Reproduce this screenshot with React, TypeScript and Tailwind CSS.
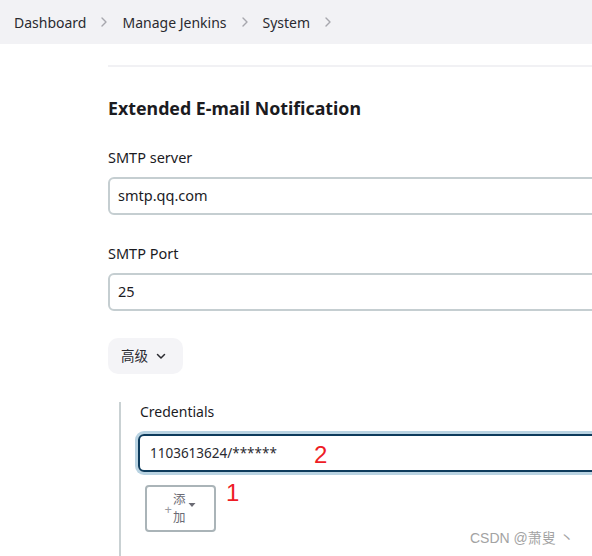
import React from "react";

const Chevron = () => (
  <svg width="10" height="12" viewBox="0 0 10 12" className="mx-[13px]">
    <path d="M3 2l4 4-4 4" fill="none" stroke="#a7a7ad" strokeWidth="1.4" strokeLinecap="round" strokeLinejoin="round" />
  </svg>
);

export default function App() {
  return (
    <div
      className="relative w-[592px] h-[556px] overflow-hidden bg-white text-[#1b1b1f]"
      style={{ fontFamily: '"Noto Sans", "Noto Sans CJK SC", sans-serif' }}
    >
      <div className="h-[44px] bg-[#f2f2f5] flex items-center pl-[14px] text-[14px] text-[#2a2a30]">
        <span>Dashboard</span>
        <Chevron />
        <span>Manage Jenkins</span>
        <Chevron />
        <span>System</span>
        <Chevron />
      </div>
      <div className="pl-[108px]">
        <div className="mt-[21px] h-[2px] bg-[#f1f1f4]" />
        <h2 className="mt-[30px] text-[17.8px] font-bold leading-[22px] whitespace-nowrap">Extended E-mail Notification</h2>
        <div className="mt-[28px] text-[14.5px] leading-[20px]">SMTP server</div>
        <div className="mt-[10px] h-[38px] w-[520px] border-2 border-[#c5ced1] rounded-[6px] flex items-center pl-[8px] text-[14.5px]">
          smtp.qq.com
        </div>
        <div className="mt-[28px] text-[14.5px] leading-[20px]">SMTP Port</div>
        <div className="mt-[10px] h-[38px] w-[520px] border-2 border-[#c5ced1] rounded-[6px] flex items-center pl-[8px] text-[14.5px]">
          25
        </div>
        <div className="mt-[27px] h-[36px] w-[75px] rounded-[10px] bg-[#f4f4f7] flex items-center pl-[13px] text-[13.5px] text-[#2a2a30]">
          <span>高级</span>
          <svg width="10" height="8" viewBox="0 0 10 8" className="ml-[8px]">
            <path d="M1.5 2.5l3.5 3.5 3.5-3.5" fill="none" stroke="#2a2a30" strokeWidth="1.5" strokeLinecap="round" strokeLinejoin="round" />
          </svg>
        </div>
        <div className="mt-[29px] ml-[11px] border-l-2 border-[#c9d1d3] pl-[19px] pb-[40px]">
          <div className="text-[14px] leading-[20px] -mt-[1px]">Credentials</div>
          <div className="mt-[12px] -ml-[2px] h-[38px] w-[480px] border-2 border-[#0d3b5c] rounded-[6px] shadow-[0_0_0_3px_#b9d3e2] flex items-center pl-[10px] text-[13.5px] text-[#2a2a30]">
            1103613624/******
          </div>
          <div className="mt-[13px] ml-[5px] h-[47px] w-[71px] border-2 border-[#aab4b8] rounded-[4px] flex items-center justify-center text-[#6b6b74]">
            <span className="text-[13px] leading-[16px] mr-[1px] text-[#9a9aa2]">+</span>
            <span className="flex flex-col text-[12.5px] leading-[18px]">
              <span>添</span>
              <span>加</span>
            </span>
            <svg width="8" height="6" viewBox="0 0 8 6" className="ml-[3px] -mt-[8px]">
              <path d="M0.5 1h7L4 5z" fill="#6b6b74" />
            </svg>
          </div>
        </div>
      </div>
      <div
        className="absolute left-[314px] top-[441px] text-[24px] leading-[28px] text-[#ee1c25]"
        style={{ fontFamily: '"Liberation Sans", sans-serif' }}
      >
        2
      </div>
      <div
        className="absolute left-[226px] top-[479px] text-[24px] leading-[28px] text-[#ee1c25]"
        style={{ fontFamily: '"Liberation Sans", sans-serif' }}
      >
        1
      </div>
      <div
        className="absolute left-[470px] top-[529px] text-[14px] leading-[18px] text-[#a3a3a3] whitespace-nowrap"
        style={{ fontFamily: '"Liberation Sans", "Noto Sans CJK SC", sans-serif' }}
      >
        CSDN @萧叟 丶
      </div>
    </div>
  );
}
